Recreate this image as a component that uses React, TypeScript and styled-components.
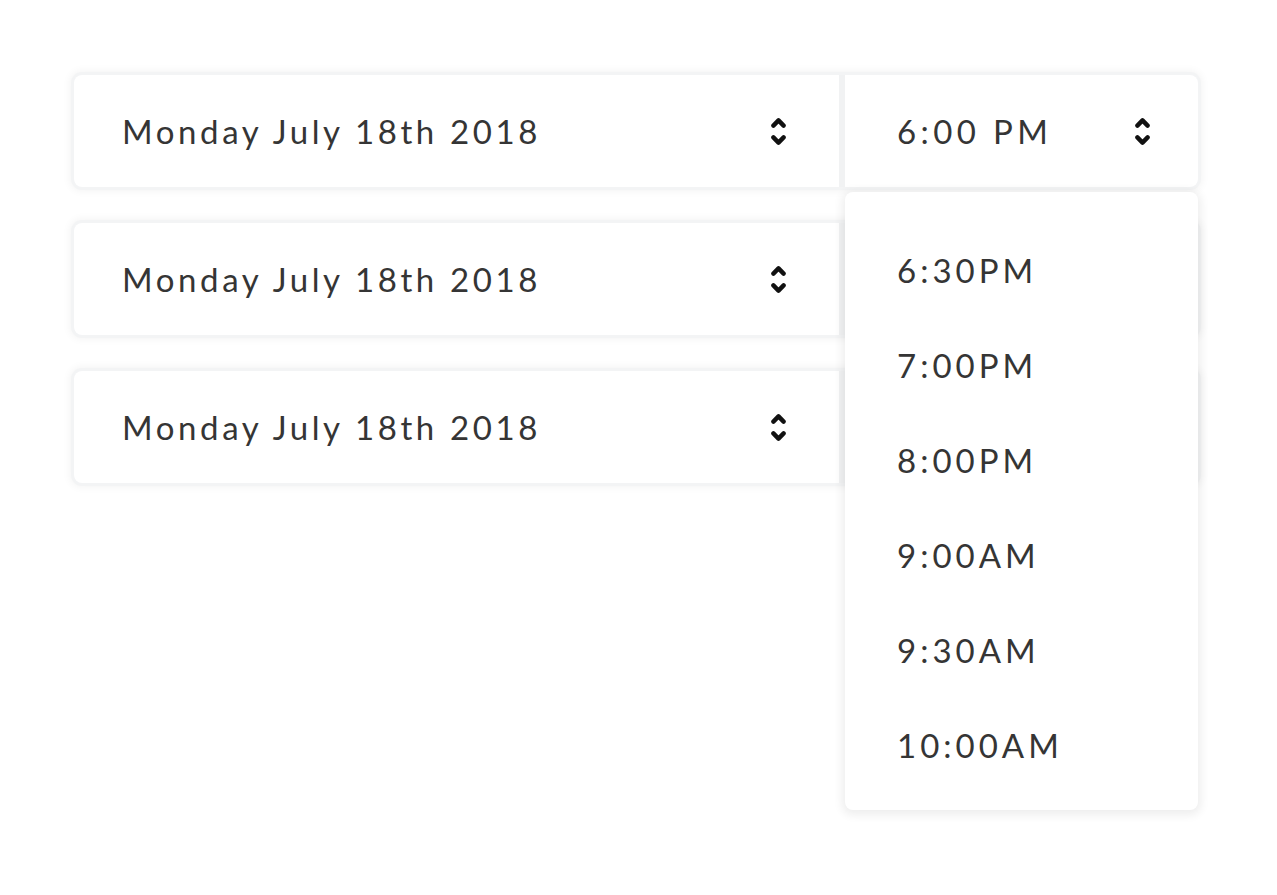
import styled, { createGlobalStyle } from 'styled-components';

const Global = createGlobalStyle`
  html, body {
    margin: 0;
    padding: 0;
    background: #fff;
  }
  body {
    font-family: Lato, 'Liberation Sans', sans-serif;
    color: #353535;
  }
`;

const Page = styled.div`
  display: flex;
  flex-direction: column;
  gap: 36px;
  padding: 75px 0 0 74px;
  width: 1124px;
  min-height: 820px;
`;

const Row = styled.div<{ $top?: boolean }>`
  position: relative;
  z-index: ${(p) => (p.$top ? 2 : 1)};
  display: flex;
  gap: 6px;
  height: 112px;
  background: #f1f2f3;
  border-radius: 8px;
  box-shadow: 0 0 0 3px #f3f4f5, 0 0 9px 4px rgba(0, 0, 0, 0.05);
`;

const Field = styled.div<{ $wide?: boolean; $pad: number }>`
  flex: 0 0 auto;
  display: flex;
  align-items: center;
  justify-content: space-between;
  background: #fff;
  width: ${(p) => (p.$wide ? '765px' : '353px')};
  padding: 0 ${(p) => (p.$wide ? 53 : 48)}px 0 ${(p) => p.$pad}px;
  box-sizing: border-box;
  border-radius: ${(p) => (p.$wide ? '8px 0 0 8px' : '0 8px 8px 0')};
`;

const Label = styled.span<{ $spacing: number }>`
  font-size: 33px;
  letter-spacing: ${(p) => p.$spacing}px;
  color: #353535;
`;

const Menu = styled.ul`
  position: absolute;
  top: 117px;
  left: 771px;
  width: 353px;
  margin: 0;
  padding: 30px 0 18px;
  list-style: none;
  background: #fff;
  border-radius: 8px;
  box-shadow: 0 2px 10px 3px rgba(0, 0, 0, 0.07);
`;

const Item = styled.li`
  height: 95px;
  display: flex;
  align-items: center;
  padding-left: 52px;
  font-size: 33px;
  letter-spacing: 4px;
  color: #353535;
`;

function Chevrons() {
  return (
    <svg width="15" height="32" viewBox="0 0 15 32" fill="none">
      <path
        d="M2.4 10.6 L7.5 5.4 L12.6 10.6"
        stroke="#111"
        strokeWidth="4.4"
        strokeLinecap="round"
        strokeLinejoin="round"
      />
      <path
        d="M2.4 22.4 L7.5 27.6 L12.6 22.4"
        stroke="#111"
        strokeWidth="4.4"
        strokeLinecap="round"
        strokeLinejoin="round"
      />
    </svg>
  );
}

const times = ['6:30PM', '7:00PM', '8:00PM', '9:00AM', '9:30AM', '10:00AM'];

export default function App() {
  return (
    <>
      <Global />
      <Page>
        {[0, 1, 2].map((i) => (
          <Row key={i} $top={i === 0}>
            <Field $wide $pad={48}>
              <Label $spacing={3.6}>Monday July 18th 2018</Label>
              <Chevrons />
            </Field>
            <Field $pad={52}>
              {i === 0 && (
                <>
                  <Label $spacing={4.4}>6:00 PM</Label>
                  <Chevrons />
                </>
              )}
            </Field>
            {i === 0 && (
              <Menu>
                {times.map((t) => (
                  <Item key={t}>{t}</Item>
                ))}
              </Menu>
            )}
          </Row>
        ))}
      </Page>
    </>
  );
}
